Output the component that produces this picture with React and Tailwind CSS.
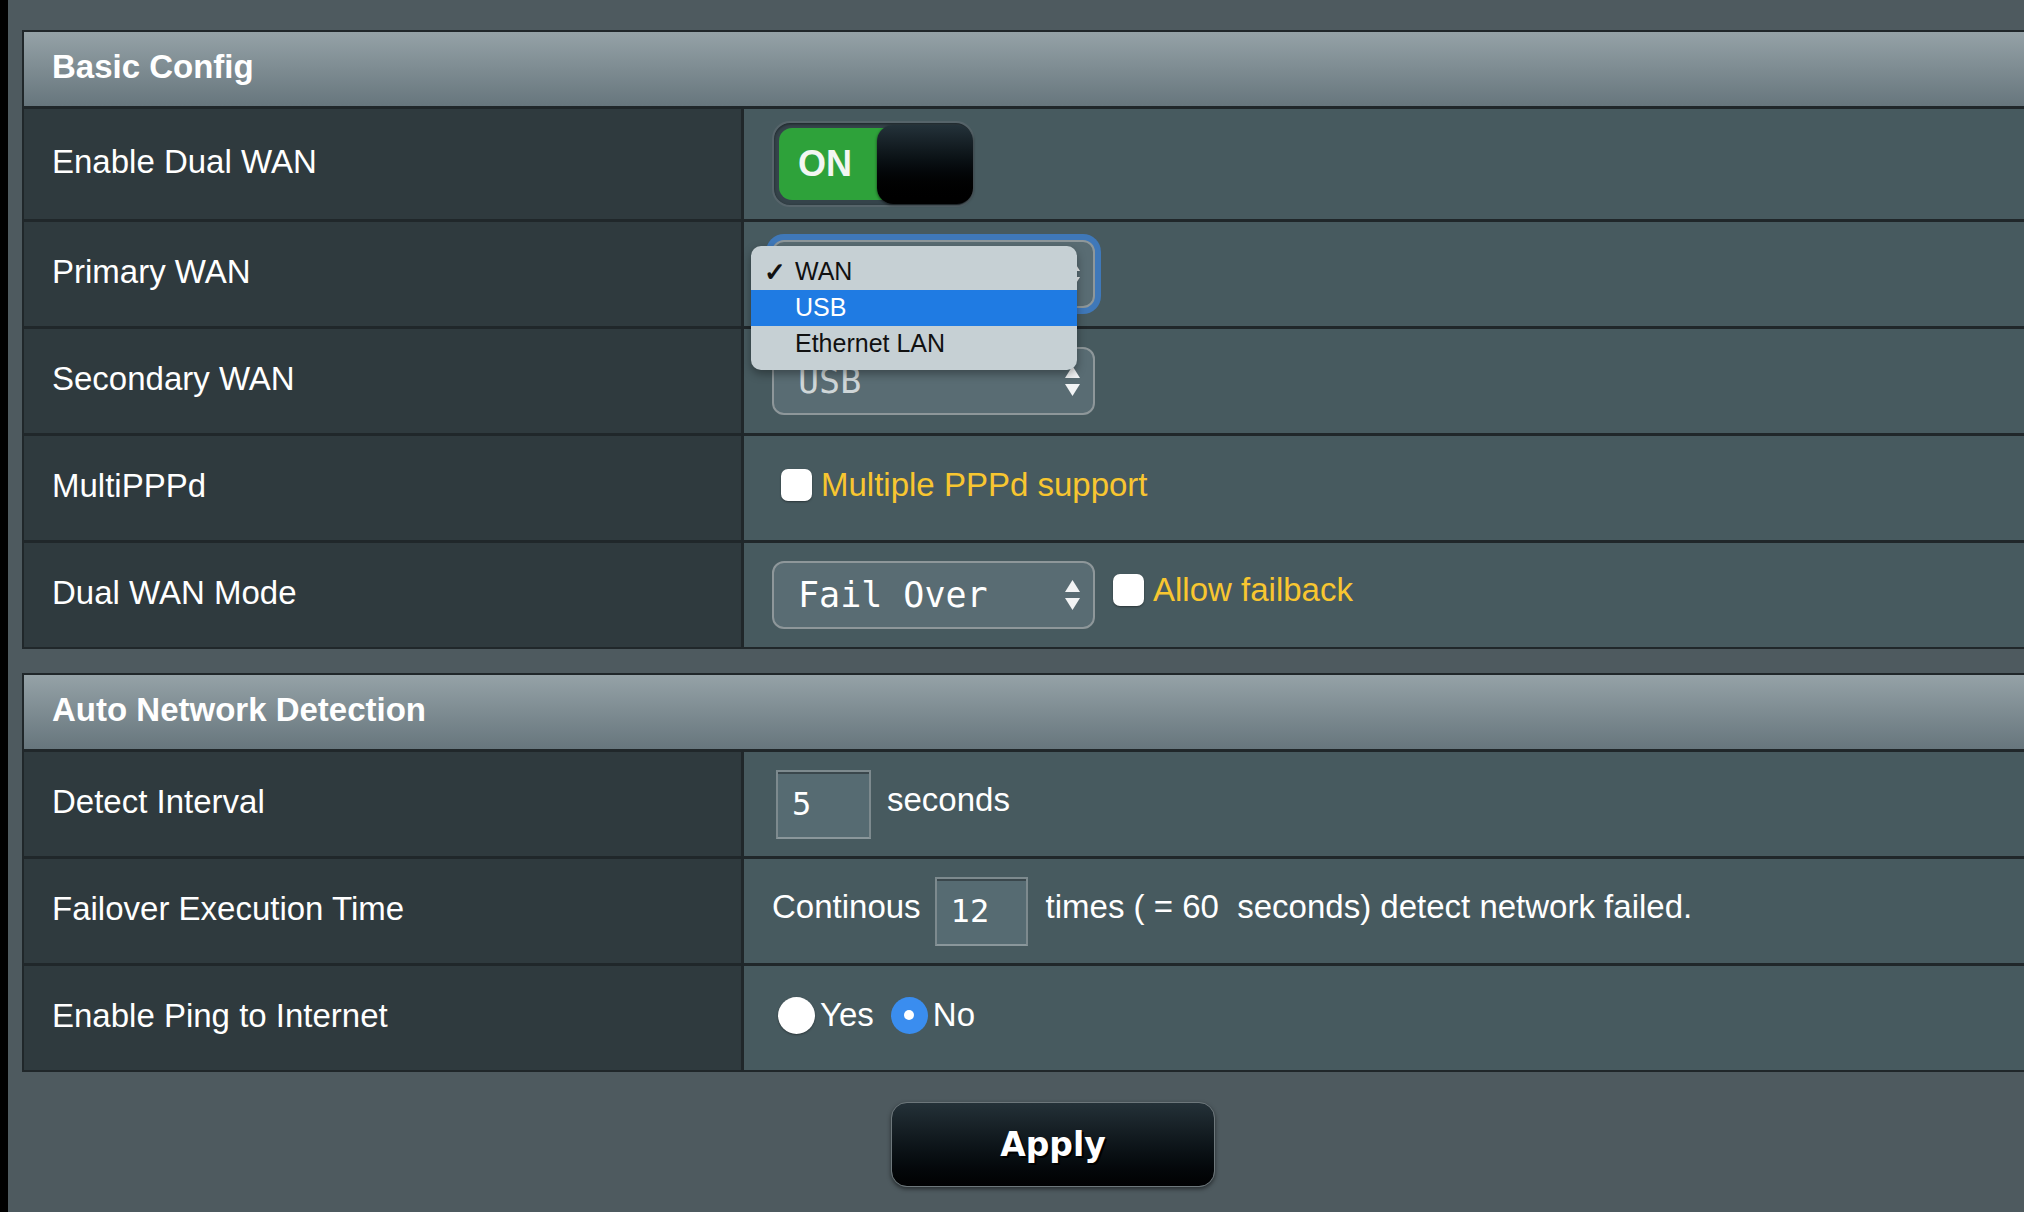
import React from 'react';

// little up/down arrows used by the mac-style selects
const SelectArrows = ({ color = '#f2f4f5' }) => (
  <svg width="17" height="32" viewBox="0 0 17 32" className="shrink-0">
    <polygon points="8.5,1 16,13 1,13" fill={color} />
    <polygon points="1,19 16,19 8.5,31" fill={color} />
  </svg>
);

const Select = ({ value, dim, focused }) => (
  <div
    className={`flex h-[68px] w-[323px] items-center justify-between rounded-[12px] border-2 border-[#8e979a] bg-[#596c73] pl-[24px] pr-[12px] font-['DejaVu_Sans_Mono',monospace] text-[35px] ${
      dim ? 'text-[#cfd6d8]' : 'text-white'
    } ${focused ? 'ring-[6px] ring-[#3d7fcf]/80' : ''}`}
  >
    <span className="leading-none">{value}</span>
    <SelectArrows />
  </div>
);

const Checkbox = ({ className = '' }) => (
  <div className={`h-[32px] w-[31px] shrink-0 rounded-[7px] bg-white shadow-[0_1px_2px_rgba(0,0,0,0.4)] ${className}`} />
);

const TextBox = ({ value, width }) => (
  <div
    className={`${width} flex h-[69px] items-center border-2 border-x-[#7d8a8e] border-b-[#8a979b] border-t-[#7d8a8e] bg-[#566b72] pl-[14px] font-['DejaVu_Sans_Mono',monospace] text-[32px] text-white shadow-[inset_0_2px_0_#3a474c]`}
  >
    {value}
  </div>
);

const Radio = ({ checked }) =>
  checked ? (
    <div className="flex h-[37px] w-[37px] items-center justify-center rounded-full bg-[#3a8def]">
      <div className="h-[10px] w-[10px] rounded-full bg-white" />
    </div>
  ) : (
    <div className="h-[37px] w-[37px] rounded-full bg-white shadow-[0_1px_2px_rgba(0,0,0,0.4)]" />
  );

const Row = ({ label, h = 'h-[107px]', children }) => (
  <div className={`flex ${h} border-t-[3px] border-[#20272a]`}>
    <div className="flex w-[720px] shrink-0 items-center border-r-[3px] border-[#20272a] bg-[#2f3a3e] pb-[4px] pl-[28px] text-white">
      {label}
    </div>
    <div className="flex flex-1 items-center bg-[#475a5f] pl-[28px] text-white">{children}</div>
  </div>
);

const Section = ({ title, className = '', children }) => (
  <div className={`w-[2062px] border-2 border-[#20272a] ${className}`}>
    <div className="flex h-[74px] items-center bg-gradient-to-b from-[#95a2a7] to-[#67767d] pb-[4px] pl-[28px] font-bold text-white">
      {title}
    </div>
    {children}
  </div>
);

const DualWanSwitch = () => (
  <div className="flex h-[86px] w-[202px] items-center rounded-[18px] border-2 border-[#56646a] bg-[#35434a] pl-[5px] shadow-[inset_0_1px_3px_rgba(0,0,0,0.5)]">
    <div className="flex h-[72px] w-[110px] shrink-0 items-center rounded-l-[13px] bg-[#2ea23a] pl-[19px] text-[36px] font-bold leading-none text-[#f2f6f2]">
      ON
    </div>
    <div className="ml-[-12px] h-[79px] w-[96px] shrink-0 rounded-[16px] bg-gradient-to-b from-[#24323a] to-[#000000] shadow-[0_1px_3px_rgba(0,0,0,0.6)]" />
  </div>
);

const WanMenu = () => {
  const items = ['WAN', 'USB', 'Ethernet LAN'];
  return (
    <div className="absolute left-[-21px] top-[6px] z-10 w-[326px] rounded-[10px] bg-[#c6d0d4] pb-[8px] pt-[8px] font-['Liberation_Sans',Arial,sans-serif] text-[25px] text-[#111] shadow-[0_4px_10px_rgba(0,0,0,0.35)]">
      {items.map((item, i) => (
        <div
          key={item}
          className={`flex h-[36px] items-center ${i === 1 ? 'bg-[#1f7be3] text-white' : ''}`}
        >
          <span className="flex w-[44px] justify-center pl-[4px] text-[26px] font-bold">{i === 0 ? '✓' : ''}</span>
          <span>{item}</span>
        </div>
      ))}
    </div>
  );
};

const App = () => {
  return (
    <div className="flex h-[1212px] w-[2024px] overflow-hidden bg-[#4e5a5f] font-['Liberation_Sans',Arial,sans-serif] text-[33px]">
      <div className="w-[8px] shrink-0 bg-black" />
      <div className="flex flex-col pl-[14px] pt-[30px]">
        <Section title="Basic Config">
          <Row label="Enable Dual WAN" h="h-[113px]">
            <DualWanSwitch />
          </Row>
          <Row label="Primary WAN">
            <div className="relative">
              <Select value="WAN" focused />
              <WanMenu />
            </div>
          </Row>
          <Row label="Secondary WAN">
            <Select value="USB" dim />
          </Row>
          <Row label="MultiPPPd">
            <Checkbox className="ml-[9px] mt-[-7px]" />
            <span className="ml-[9px] mt-[-7px] text-[#f8c630]">Multiple PPPd support</span>
          </Row>
          <Row label="Dual WAN Mode">
            <Select value="Fail Over" />
            <Checkbox className="ml-[18px] mt-[-11px]" />
            <span className="ml-[9px] mt-[-11px] text-[#f8c630]">Allow failback</span>
          </Row>
        </Section>

        <Section title="Auto Network Detection" className="mt-[24px]">
          <Row label="Detect Interval">
            <div className="ml-[4px]">
              <TextBox value="5" width="w-[95px]" />
            </div>
            <span className="ml-[16px] mt-[-8px]">seconds</span>
          </Row>
          <Row label="Failover Execution Time">
            <span className="mt-[-8px]">Continous</span>
            <div className="ml-[14px]">
              <TextBox value="12" width="w-[93px]" />
            </div>
            <span className="ml-[18px] mt-[-8px] whitespace-pre">times ( = 60  seconds) detect network failed.</span>
          </Row>
          <Row label="Enable Ping to Internet">
            <div className="ml-[6px] mt-[-6px] flex items-center">
              <Radio />
              <span className="ml-[5px]">Yes</span>
              <div className="ml-[17px]">
                <Radio checked />
              </div>
              <span className="ml-[5px]">No</span>
            </div>
          </Row>
        </Section>

        <div className="flex w-[2062px] justify-center pt-[30px]">
          <button className="flex h-[85px] w-[324px] items-center justify-center rounded-[16px] border border-[#6d777b] bg-gradient-to-b from-[#243138] to-[#010203] font-['DejaVu_Sans',Verdana,sans-serif] text-[33px] font-bold text-white shadow-[0_2px_4px_rgba(0,0,0,0.5)] [text-shadow:2px_2px_0_#000]">
            Apply
          </button>
        </div>
      </div>
    </div>
  );
};

export default App;
